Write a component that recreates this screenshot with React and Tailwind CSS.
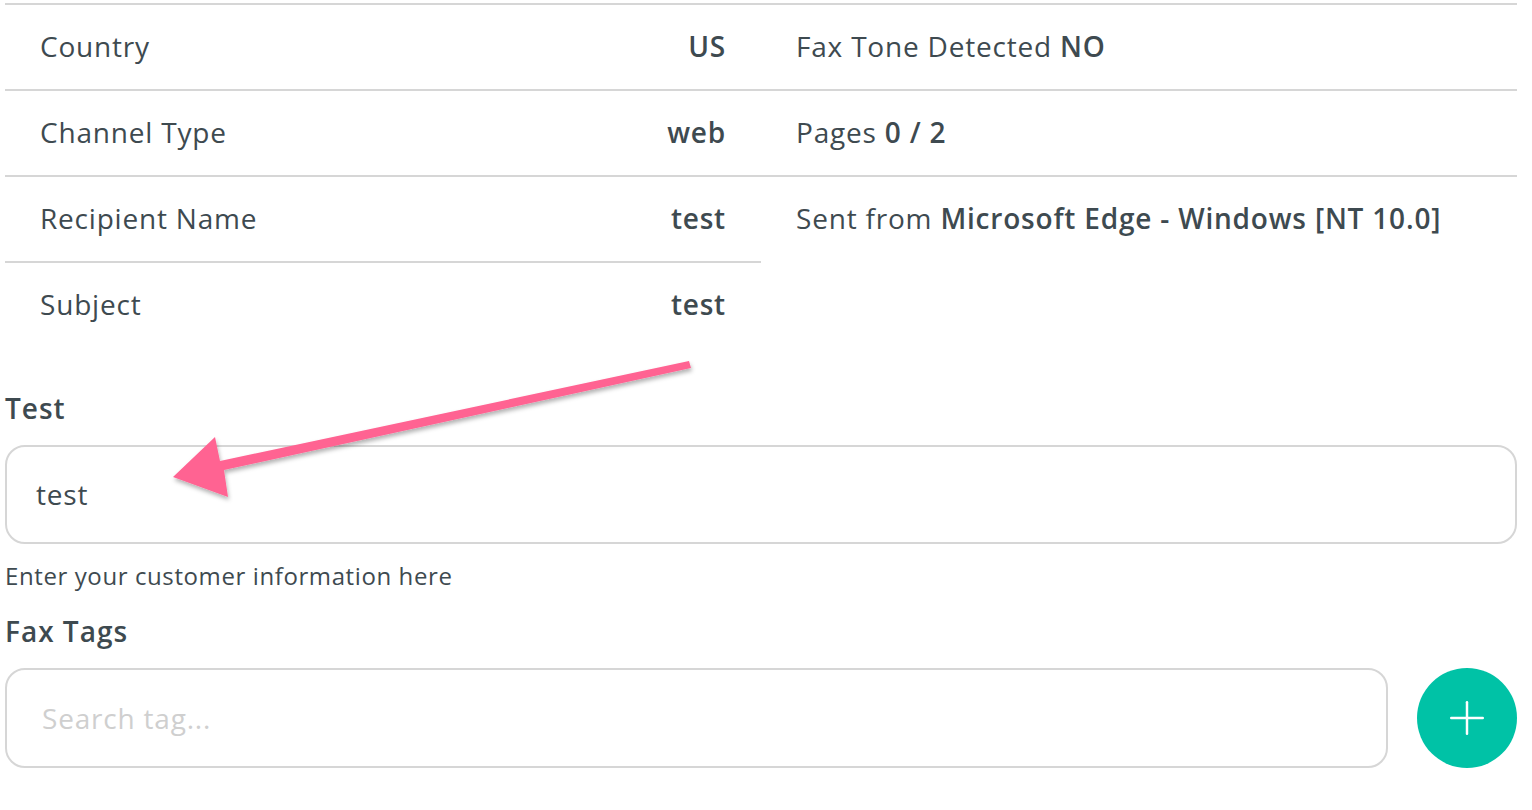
import { Plus } from "lucide-react";

const leftRows = [
  { label: "Country", value: "US" },
  { label: "Channel Type", value: "web" },
  { label: "Recipient Name", value: "test" },
  { label: "Subject", value: "test" },
];

const Arrow = () => (
  <svg
    className="absolute left-0 top-0 pointer-events-none"
    width="1532"
    height="810"
    viewBox="0 0 1532 810"
  >
    <defs>
      <filter id="arrowShadow" x="-10%" y="-10%" width="120%" height="140%">
        <feDropShadow dx="1" dy="3" stdDeviation="2" floodColor="#000" floodOpacity="0.3" />
      </filter>
    </defs>
    <g filter="url(#arrowShadow)" fill="#ff6392">
      <path d="M689 361 L691 368 L224 470 L228 497 L173 477 L215 437 L220 461 Z" />
    </g>
  </svg>
);

export default function App() {
  return (
    <div
      className="relative w-[1532px] h-[810px] bg-white text-[#3e4a50] overflow-hidden"
      style={{ fontFamily: '"Open Sans", "Liberation Sans", sans-serif' }}
    >
      <div className="px-[5px] pt-[3px] pr-[15px]">
        <div className="grid grid-cols-2 text-[28px] tracking-[0.8px] leading-[38px]">
          <div>
            {leftRows.map((row) => (
              <div
                key={row.label}
                className="flex items-center justify-between h-[86px] border-t-2 border-[#d6d6d6] pl-[35px] pr-[35px] pb-[2px]"
              >
                <span>{row.label}</span>
                <span className="font-semibold">{row.value}</span>
              </div>
            ))}
          </div>
          <div>
            <div className="flex items-center h-[86px] border-t-2 border-[#d6d6d6] pl-[35px] pb-[2px]">
              <span>
                Fax Tone Detected <span className="font-semibold">NO</span>
              </span>
            </div>
            <div className="flex items-center h-[86px] border-t-2 border-[#d6d6d6] pl-[35px] pb-[2px]">
              <span>
                Pages <span className="font-semibold">0 / 2</span>
              </span>
            </div>
            <div className="flex items-center h-[86px] border-t-2 border-[#d6d6d6] pl-[35px] pb-[2px]">
              <span>
                Sent from <span className="font-semibold">Microsoft Edge - Windows [NT 10.0]</span>
              </span>
            </div>
          </div>
        </div>

        <div className="mt-[42px] text-[28px] font-[560] tracking-[1px] leading-[38px]">Test</div>
        <div className="mt-[18px] h-[99px] rounded-[20px] border-2 border-[#d6d6d6] flex items-center px-[29px] pb-[2px] text-[28px] tracking-[0.8px]">
          test
        </div>
        <div className="mt-[17px] text-[24px] tracking-[0.6px] leading-[30px]">
          Enter your customer information here
        </div>

        <div className="mt-[21px] text-[28px] font-[560] tracking-[1px] leading-[38px]">Fax Tags</div>
        <div className="mt-[18px] flex items-center gap-[29px]">
          <div className="flex-1 h-[100px] rounded-[20px] border-2 border-[#d6d6d6] flex items-center px-[35px] text-[28px] tracking-[0.8px] text-[#cfcfcf]">
            Search tag...
          </div>
          <button className="w-[100px] h-[100px] rounded-full bg-[#00c2a6] flex items-center justify-center shrink-0">
            <Plus className="text-white" size={54} strokeWidth={1.1} />
          </button>
        </div>
      </div>
      <Arrow />
    </div>
  );
}
